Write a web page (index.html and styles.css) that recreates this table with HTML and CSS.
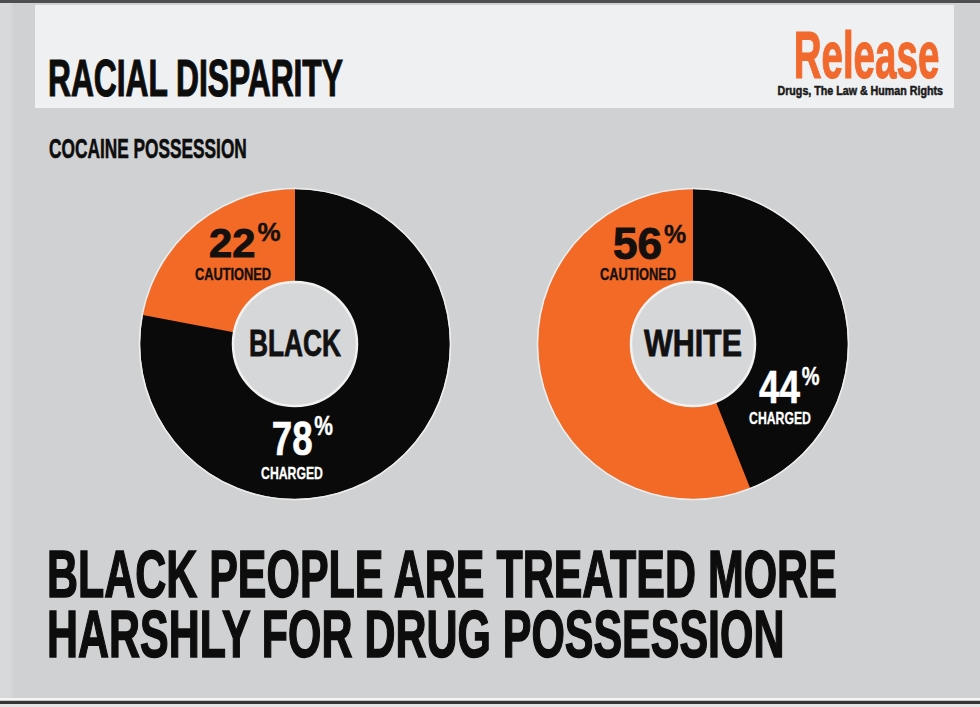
FILE: index.html
```html
<!DOCTYPE html>
<html lang="en">
<head>
<meta charset="utf-8">
<title>Racial Disparity</title>
<link rel="stylesheet" href="styles.css">
</head>
<body>
<div class="page">
  <header class="header">
    <h1 class="title"><span class="sx sx-title">RACIAL DISPARITY</span></h1>
    <div class="logo">
      <span class="logo-name">Release</span>
      <span class="logo-tag">Drugs, The Law &amp; Human Rights</span>
    </div>
  </header>

  <h2 class="subtitle"><span class="sx sx-sub">COCAINE POSSESSION</span></h2>

  <div class="charts">
    <div class="donut">
      <svg class="ring" viewBox="0 0 314 314" width="314" height="314" aria-hidden="true">
        <circle cx="157" cy="157" r="155" fill="#0a0a0a"/>
        <path d="M157 157 L157 2 A155 155 0 0 0 4.7 128 Z" fill="#f26a26"/>
        <circle cx="157" cy="157" r="155.5" fill="none" stroke="#eeeeee" stroke-width="1.6"/>
        <circle cx="157" cy="157" r="62" fill="#d6d7d9" stroke="#f1f1f1" stroke-width="2.5"/>
      </svg>
      <div class="hole"><span class="hole-text hole-black">BLACK</span></div>
      <div class="lbl lbl-22 dark">
        <div class="num"><span class="dg">22<span class="pct">%</span></span></div>
        <div class="cap cap-caut">CAUTIONED</div>
      </div>
      <div class="lbl lbl-78 light">
        <div class="num"><span class="dg">78<span class="pct">%</span></span></div>
        <div class="cap cap-chg">CHARGED</div>
      </div>
    </div>

    <div class="donut">
      <svg class="ring" viewBox="0 0 314 314" width="314" height="314" aria-hidden="true">
        <circle cx="157" cy="157" r="155" fill="#0a0a0a"/>
        <path d="M157 157 L157 2 A155 155 0 1 0 214.1 301.1 Z" fill="#f26a26"/>
        <circle cx="157" cy="157" r="155.5" fill="none" stroke="#eeeeee" stroke-width="1.6"/>
        <circle cx="157" cy="157" r="62" fill="#d6d7d9" stroke="#f1f1f1" stroke-width="2.5"/>
      </svg>
      <div class="hole"><span class="hole-text hole-white">WHITE</span></div>
      <div class="lbl lbl-56 dark">
        <div class="num"><span class="dg">56<span class="pct">%</span></span></div>
        <div class="cap cap-caut">CAUTIONED</div>
      </div>
      <div class="lbl lbl-44 light">
        <div class="num"><span class="dg">44<span class="pct">%</span></span></div>
        <div class="cap cap-chg">CHARGED</div>
      </div>
    </div>
  </div>

  <p class="headline"><span class="sx sx-head">BLACK PEOPLE ARE TREATED MORE<br>HARSHLY FOR DRUG POSSESSION</span></p>

  <div class="rule"></div>
</div>
</body>
</html>
```

FILE: styles.css
```css
html, body {
  margin: 0;
  padding: 0;
}

body {
  width: 980px;
  height: 707px;
  overflow: hidden;
  background: #d0d1d3;
  font-family: "Liberation Sans", Arial, sans-serif;
  font-weight: 700;
  color: #0d0d0d;
}

.page {
  box-sizing: border-box;
  height: 707px;
  display: flex;
  flex-direction: column;
  border-top: 3px solid #4e4e4e;
  padding-bottom: 3px;
  background: linear-gradient(to right, #d8d9db 0, #d8d9db 10px, #d0d1d3 14px);
}

/* generic horizontally condensed text */
.sx {
  display: block;
  white-space: nowrap;
  transform-origin: 0 50%;
}

/* ---------- header ---------- */
.header {
  height: 103px;
  margin: 2px 26px 0 35px;
  padding: 0 11px 0 13px;
  background: #eff0f2;
  display: flex;
  justify-content: space-between;
  align-items: flex-start;
}

.title {
  margin: 0;
  padding-top: 47px;
  font-size: 52px;
  line-height: 52px;
  font-weight: 700;
}

.sx-title {
  transform: scaleX(0.61);
  -webkit-text-stroke: 1.2px #0d0d0d;
}

.logo {
  margin-top: 22px;
  display: flex;
  flex-direction: column;
  align-items: flex-end;
}

.logo-name {
  display: block;
  margin-right: 4px;
  font-size: 67px;
  line-height: 56px;
  color: #f2692d;
  white-space: nowrap;
  transform: scaleX(0.575);
  transform-origin: 100% 50%;
  -webkit-text-stroke: 1.2px #f2692d;
}

.logo-tag {
  display: block;
  margin-top: 1.5px;
  font-size: 12px;
  line-height: 12px;
  color: #1a1a1a;
  white-space: nowrap;
  transform: scaleX(0.89);
  transform-origin: 100% 50%;
  -webkit-text-stroke: 0.5px #1a1a1a;
}

/* ---------- subtitle ---------- */
.subtitle {
  margin: 28px 0 0 49px;
  font-size: 27px;
  line-height: 27px;
  font-weight: 700;
}

.sx-sub {
  transform: scaleX(0.64);
  -webkit-text-stroke: 0.6px #0d0d0d;
}

/* ---------- donuts ---------- */
.charts {
  margin-top: 24px;
  padding-left: 138px;
  display: flex;
  gap: 84px;
}

.donut {
  position: relative;
  width: 314px;
  height: 314px;
}

.ring {
  display: block;
}

.hole {
  position: absolute;
  inset: 0;
  display: flex;
  align-items: center;
  justify-content: center;
}

.hole-text {
  display: block;
  font-size: 36px;
  line-height: 36px;
  color: #111;
  white-space: nowrap;
  -webkit-text-stroke: 0.8px #111;
}

.hole-black { transform: scaleX(0.73); }
.hole-white { transform: scaleX(0.845); }

.lbl {
  position: absolute;
  width: 160px;
  text-align: center;
  white-space: nowrap;
}

.lbl.dark { color: #141010; }
.lbl.light { color: #ffffff; }

.num {
  display: block;
}

.dg {
  position: relative;
  display: inline-block;
}

.dark .dg { -webkit-text-stroke: 1px #141010; }
.light .dg { -webkit-text-stroke: 0.6px #ffffff; }

.pct {
  position: absolute;
  left: 100%;
  margin-left: 2px;
  font-size: 25px;
  line-height: 25px;
  -webkit-text-stroke: 0.4px currentColor;
}

.cap {
  display: block;
}

.cap-caut {
  font-size: 16px;
  line-height: 16px;
  transform: scaleX(0.8);
  -webkit-text-stroke: 0.4px currentColor;
}

.cap-chg {
  font-size: 17px;
  line-height: 17px;
  transform: scaleX(0.72);
  -webkit-text-stroke: 0.3px currentColor;
}

/* individual label placement inside each donut */
.lbl-22 { left: 14.5px; top: 36px; }
.lbl-22 .num { height: 40px; font-size: 40px; line-height: 40px; }
.lbl-22 .dg { transform: scaleX(1.04); }
.lbl-22 .pct { top: -3px; }
.lbl-22 .cap { margin-top: 4px; }

.lbl-78 { left: 74px; top: 226.5px; }
.lbl-78 .num { height: 49px; font-size: 49px; line-height: 49px; }
.lbl-78 .dg { transform: scaleX(0.75); }
.lbl-78 .pct { top: -2px; font-size: 28px; line-height: 28px; }
.lbl-78 .cap { margin-top: 2px; }

.lbl-56 { left: 21.5px; top: 34.5px; }
.lbl-56 .num { height: 44px; font-size: 44px; line-height: 44px; }
.lbl-56 .dg { transform: scaleX(1.0); }
.lbl-56 .pct { top: 0; }
.lbl-56 .cap { margin-top: 1.5px; }

.lbl-44 { left: 164px; top: 177px; }
.lbl-44 .num { height: 46px; font-size: 46px; line-height: 46px; }
.lbl-44 .dg { transform: scaleX(0.8); }
.lbl-44 .pct { top: 0; }
.lbl-44 .cap { margin-top: 0; }

/* ---------- headline ---------- */
.headline {
  margin: 43px 0 0 47px;
  font-size: 67px;
  line-height: 60px;
  font-weight: 700;
}

.sx-head {
  transform: scaleX(0.641);
  -webkit-text-stroke: 1.6px #0d0d0d;
}

/* ---------- bottom rule ---------- */
.rule {
  margin-top: auto;
  height: 1px;
  background: #c9c9c9;
  border-top: 2px solid #f4f4f4;
  border-bottom: 3px solid #353535;
  box-shadow: 0 3px 0 #e4e4e4;
}
```
